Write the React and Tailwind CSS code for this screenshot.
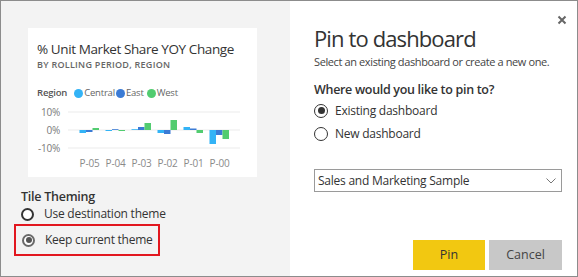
import { useState } from 'react';

const FONT = "font-['Open_Sans',sans-serif]";

const COLORS = ['#33b3f6', '#3b7bd5', '#52cc70'];
const PERIODS = ['P-05', 'P-04', 'P-03', 'P-02', 'P-01', 'P-00'];
// bar heights in px, positive goes up from the 0% line
const VALUES = [
  [-3, -2, 2],
  [-1, 0.8, -1],
  [0.8, 3, 7],
  [-3, -4, 10],
  [3, 1.5, -3],
  [-14, -5, -9],
];

const Chart = () => {
  const zero = 30;
  return (
    <svg width="229" height="75" className="block">
      {[12, 30, 48].map((y) => (
        <line key={y} x1="40" x2="212" y1={y} y2={y} stroke="#ebebeb" strokeWidth="1" />
      ))}
      <g fontFamily="Open Sans, sans-serif" fontSize="10" letterSpacing="-0.2" fill="#7a7a7a" textAnchor="end">
        <text x="32" y="15.5">10%</text>
        <text x="32" y="33.5">0%</text>
        <text x="32" y="51.5">-10%</text>
      </g>
      {VALUES.map((group, i) => {
        const cx = 61.5 + 26 * i;
        return group.map((v, j) => {
          const x = cx - 10 + j * 6.5;
          const y = v > 0 ? zero - v : zero;
          return <rect key={`${i}-${j}`} x={x} y={y} width="6.5" height={Math.abs(v)} fill={COLORS[j]} />;
        });
      })}
      <g fontFamily="Open Sans, sans-serif" fontSize="10" letterSpacing="-0.2" fill="#8a8a8a" textAnchor="middle">
        {PERIODS.map((p, i) => (
          <text key={p} x={61.5 + 26 * i} y="66.5">{p}</text>
        ))}
      </g>
    </svg>
  );
};

const ThemeRadio = ({ checked, label }) => (
  <div className="flex items-center gap-[10px] h-[18px]">
    <span className={`w-[13px] h-[13px] rounded-full border-2 flex items-center justify-center bg-white ${checked ? 'border-[#6a6a6a]' : 'border-[#333]'}`}>
      {checked && <span className="w-[6px] h-[6px] rounded-full bg-[#555]" />}
    </span>
    <span className="text-[12px] tracking-[-0.02em] text-[#333]">{label}</span>
  </div>
);

const PinRadio = ({ checked, label, onClick }) => (
  <div className="flex items-center gap-[7px] h-[23px] cursor-pointer" onClick={onClick}>
    <span className="w-[14px] h-[14px] rounded-full border border-[#333] flex items-center justify-center bg-white">
      {checked && <span className="w-[7px] h-[7px] rounded-full bg-[#333]" />}
    </span>
    <span className="text-[12px] tracking-[-0.02em] text-[#333]">{label}</span>
  </div>
);

export default function App() {
  const [target, setTarget] = useState('existing');

  return (
    <div className={`w-[578px] h-[277px] border border-[#8c8c8c] flex ${FONT}`}>
      {/* Tile preview */}
      <div className="w-[289px] bg-[#f3f3f3] pl-[27px] pt-[27px]">
        <div className="w-[229px] h-[149px] bg-white">
          <div className="pl-[9px] pt-[12px]">
            <p className="text-[13.5px] leading-[18px] tracking-[-0.03em] text-[#333]">% Unit Market Share YOY Change</p>
            <p className="text-[9px] leading-[14px] font-semibold tracking-[0.03em] text-[#666]">BY ROLLING PERIOD, REGION</p>
            <div className="flex items-center mt-[14px] h-[14px] text-[9.5px] tracking-[-0.02em] text-[#666]">
              <span className="font-semibold text-[#555] mr-[7px]">Region</span>
              <span className="w-[9px] h-[9px] rounded-full bg-[#33b3f6] mr-[1px]" />
              <span className="mr-[1px]">Central</span>
              <span className="w-[9px] h-[9px] rounded-full bg-[#3b7bd5] mr-[1px]" />
              <span className="mr-[3px]">East</span>
              <span className="w-[9px] h-[9px] rounded-full bg-[#52cc70] mr-[1px]" />
              <span>West</span>
            </div>
          </div>
          <Chart />
        </div>

        <div className="mt-[12px] -ml-[7px]">
          <p className="text-[12.5px] leading-[16px] font-semibold tracking-[-0.02em] text-[#333]">Tile Theming</p>
          <ThemeRadio label="Use destination theme" />
          <div className="-ml-[7px] w-[146px] h-[32px] border-2 border-[#e2171f] pl-[6px] flex items-center mt-[1px]">
            <ThemeRadio checked label="Keep current theme" />
          </div>
        </div>
      </div>

      {/* Pin dialog */}
      <div className="flex-1 bg-white relative pl-[24px] pr-[15px] pt-[22px] flex flex-col">
        <button className="absolute top-[14px] right-[10px] w-[10px] h-[10px]">
          <svg viewBox="0 0 10 10" width="10" height="10">
            <path d="M1.5 1.5 L8.5 8.5 M8.5 1.5 L1.5 8.5" stroke="#666" strokeWidth="2" />
          </svg>
        </button>
        <h1 className="text-[22px] leading-[30px] tracking-[-0.04em] text-[#333]">Pin to dashboard</h1>
        <p className="text-[11px] leading-[14px] tracking-[-0.035em] text-[#444] mt-[2px]">Select an existing dashboard or create a new one.</p>
        <p className="text-[12.5px] leading-[18px] font-semibold tracking-[-0.025em] text-[#333] mt-[12px]">Where would you like to pin to?</p>
        <div>
          <PinRadio label="Existing dashboard" checked={target === 'existing'} onClick={() => setTarget('existing')} />
          <PinRadio label="New dashboard" checked={target === 'new'} onClick={() => setTarget('new')} />
        </div>
        <div className="mt-[24px] h-[23px] border border-[#9a9a9a] flex items-center justify-between pl-[3px] pr-[5px]">
          <span className="text-[12px] tracking-[-0.02em] text-[#333]">Sales and Marketing Sample</span>
          <svg width="10" height="6" viewBox="0 0 10 6">
            <path d="M0.5 0.5 L5 5 L9.5 0.5" fill="none" stroke="#777" strokeWidth="1" />
          </svg>
        </div>
        <div className="mt-auto mb-[6px] flex justify-end gap-[4px]">
          <button className="w-[72px] h-[30px] bg-[#f2c811] text-[12.5px] text-[#333]">Pin</button>
          <button className="w-[73px] h-[30px] bg-[#c8c8c8] text-[12.5px] text-[#444]">Cancel</button>
        </div>
      </div>
    </div>
  );
}
